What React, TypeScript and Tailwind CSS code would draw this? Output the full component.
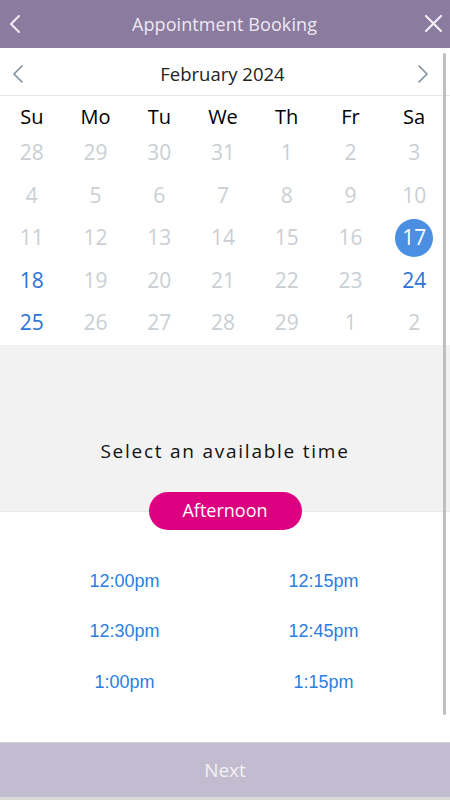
import React from "react";

const days = ["Su", "Mo", "Tu", "We", "Th", "Fr", "Sa"];
type Cell = { n: number; kind: "muted" | "avail" | "sel" };
const m = (n: number): Cell => ({ n, kind: "muted" });
const a = (n: number): Cell => ({ n, kind: "avail" });
const rows: Cell[][] = [
  [m(28), m(29), m(30), m(31), m(1), m(2), m(3)],
  [m(4), m(5), m(6), m(7), m(8), m(9), m(10)],
  [m(11), m(12), m(13), m(14), m(15), m(16), { n: 17, kind: "sel" }],
  [a(18), m(19), m(20), m(21), m(22), m(23), a(24)],
  [a(25), m(26), m(27), m(28), m(29), m(1), m(2)],
];
const times = ["12:00pm", "12:15pm", "12:30pm", "12:45pm", "1:00pm", "1:15pm"];

export default function App() {
  return (
    <div
      className="relative w-[450px] h-[800px] flex flex-col bg-white overflow-hidden"
      style={{ fontFamily: '"Open Sans", "Noto Sans", sans-serif' }}
    >
      {/* Header */}
      <div className="h-[48px] bg-[#8a7b9f] flex items-center justify-between shrink-0">
        <svg width="28" height="48" viewBox="0 0 28 48" className="ml-[1px]">
          <path d="M18 16 L10 24 L18 32" fill="none" stroke="#f3eef6" strokeWidth="2" strokeLinecap="round" strokeLinejoin="round" />
        </svg>
        <div className="text-[18px] text-[#efe9f2] tracking-[0.1px] ml-[6px]">Appointment Booking</div>
        <svg width="36" height="48" viewBox="0 0 36 48">
          <path d="M12 16 L27 31 M27 16 L12 31" fill="none" stroke="#f3eef6" strokeWidth="2.2" strokeLinecap="round" />
        </svg>
      </div>

      {/* Month nav */}
      <div className="h-[48px] flex items-center justify-between border-b border-[#e4e8ea] pt-[4px] shrink-0">
        <svg width="36" height="44" viewBox="0 0 36 44">
          <path d="M22 14 L14 22 L22 30" fill="none" stroke="#7d8e9a" strokeWidth="1.6" strokeLinecap="round" strokeLinejoin="round" />
        </svg>
        <div className="text-[18.5px] text-[#222222] ml-[4px]">February 2024</div>
        <svg width="36" height="44" viewBox="0 0 36 44" className="mr-[9px]">
          <path d="M14 14 L22 22 L14 30" fill="none" stroke="#7d8e9a" strokeWidth="1.6" strokeLinecap="round" strokeLinejoin="round" />
        </svg>
      </div>

      {/* Calendar */}
      <div className="w-[446px] shrink-0">
        <div className="grid grid-cols-7 h-[36px] pt-[6px]">
          {days.map((d) => (
            <div key={d} className="text-center text-[20px] leading-[30px] text-black">
              {d}
            </div>
          ))}
        </div>
        <div className="flex flex-col pb-[1px]">
          {rows.map((r, i) => (
            <div key={i} className="grid grid-cols-7 h-[42.4px]">
              {r.map((c, j) => (
                <div key={j} className="flex items-center justify-center">
                  {c.kind === "sel" ? (
                    <div className="w-[38px] h-[38px] rounded-full bg-[#4a8fe1] flex items-center justify-center text-white text-[21px]">
                      {c.n}
                    </div>
                  ) : (
                    <span
                      className={
                        c.kind === "avail"
                          ? "text-[21px] text-[#2d72d9]"
                          : "text-[21px] text-[#c9cfd4]"
                      }
                    >
                      {c.n}
                    </span>
                  )}
                </div>
              ))}
            </div>
          ))}
        </div>
      </div>

      {/* Select time section */}
      <div className="h-[167px] bg-[#f2f2f2] border-b border-[#e3ebeb] flex flex-col justify-end items-center pb-[46px] shrink-0">
        <div className="text-[19px] leading-[28px] tracking-[1.75px] text-[#111111]">
          Select an available time
        </div>
      </div>
      <div className="relative -mt-[20px] mx-auto w-[153px] h-[38px] rounded-full bg-[#dc0081] flex items-center justify-center text-white text-[18px] shrink-0">
        Afternoon
      </div>

      {/* Time slots */}
      <div
        className="grid grid-cols-[199px_199px] pl-[25px] mt-[26px] shrink-0"
        style={{ fontFamily: '"Liberation Sans", Arial, sans-serif' }}
      >
        {times.map((t) => (
          <div key={t} className="h-[50.5px] flex items-center justify-center text-[18px] text-[#2b7de1]">
            {t}
          </div>
        ))}
      </div>

      <div className="flex-1" />

      {/* Footer */}
      <div className="h-[55px] bg-[#c1bccf] border-t border-[#d3cfdc] flex items-center justify-center text-[19px] text-[#f3f1f6] shrink-0">
        Next
      </div>
      <div className="h-[3px] bg-[#d9d9d9] shrink-0" />

      {/* Scrollbar overlay */}
      <div className="absolute left-[443px] top-[53px] w-[3px] h-[662px] bg-[#bfbfbf] rounded-full" />
    </div>
  );
}
